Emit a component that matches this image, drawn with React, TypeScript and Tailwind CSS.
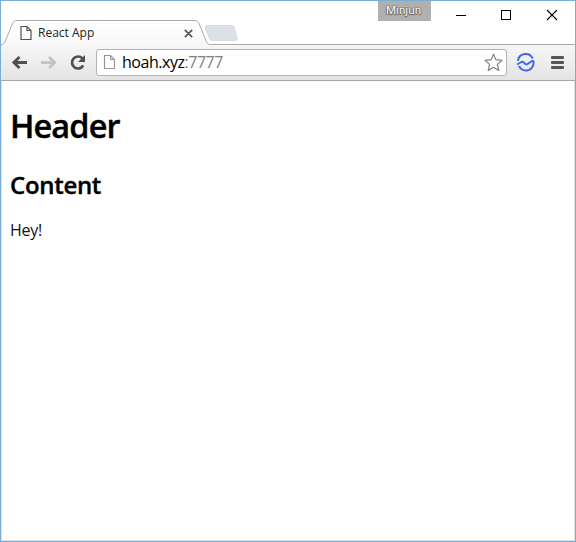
import React from "react";

function PageIcon({ className, stroke }: { className: string; stroke: string }) {
  return (
    <svg className={className} viewBox="0 0 12 16" fill="none" stroke={stroke} strokeWidth="1.2">
      <path d="M1 1.5h6L11 5.500v9H1zM7 1.500v4h4" />
    </svg>
  );
}

function TitleBar() {
  return (
    <div className="relative flex h-[43px] shrink-0 items-start bg-white">
      <svg className="absolute left-0 top-0 h-[44px] w-[574px]" viewBox="1 1 574 44" fill="none">
        <defs>
          <linearGradient id="tab" x1="0" y1="0" x2="0" y2="1">
            <stop offset="0" stopColor="#ffffff" />
            <stop offset="1" stopColor="#f8f8f8" />
          </linearGradient>
        </defs>
        <path d="M1 44.500H3C5 44.500 5.500 43 6.300 41L13.500 23.500C14.500 21.300 15.500 20.500 18 20.500H194C197 20.500 198 21.300 199 23.500L206.500 41.500C207.500 44 208.500 44.500 211 44.500H575V45H1Z" fill="url(#tab)" />
        <path d="M1 44.500C4 44.500 4.500 43 5.300 41L12.500 23.500C13.500 21.300 14.500 20.500 17 20.500H194C197 20.500 198 21.300 199 23.500L206.500 41.500C207.500 44 208.500 44.500 211 44.500H575" stroke="#aaaaaa" />
        <path d="M208 25.500H231C233 25.500 233.700 26.300 234.300 28L236.800 37.500C237.500 40 237 40.500 235 40.500H213C211 40.500 210 40 209.300 38.500L205.500 28.500C204.800 26.500 205.500 25.500 208 25.500Z" fill="#dce1e8" stroke="#d8dade" />
      </svg>
      <div className="relative mt-[20px] flex h-[24px] w-[204px] items-center pl-[19px]">
        <PageIcon className="h-[16px] w-[12px]" stroke="#505050" />
        <span className="ml-[6px] whitespace-nowrap font-['Open_Sans'] text-[12px] leading-none text-[#222]">React App</span>
        <svg className="ml-auto mr-[12px] h-[9px] w-[9px]" viewBox="0 0 9 9" stroke="#5a5a5a" strokeWidth="1.700">
          <path d="M.8.8l7.400 7.400M8.200.8L.8 8.200" />
        </svg>
      </div>
      <div className="relative ml-[173px] flex h-[20px] w-[53px] items-center justify-center bg-[#b0b0b0] pr-[2px] font-['Roboto'] text-[11.500px] leading-none tracking-[0.1px] text-white [text-shadow:0_0_1px_#444,0_0_2px_#555,0_1px_1px_#555]">
        Minjun
      </div>
      <svg className="relative ml-[22px] h-[24px] w-[110px]" viewBox="453 1 110 24" fill="none" stroke="#000" shapeRendering="crispEdges">
        <path d="M456 15.500h10M501.500 10.500h9v9h-9z" />
        <path d="M547 10l10 10M557 10l-10 10" shapeRendering="auto" strokeWidth="1.100" />
      </svg>
    </div>
  );
}

function Toolbar() {
  return (
    <div className="flex h-[37px] shrink-0 items-center border-b border-[#a7a7a7] bg-linear-to-b from-[#f7f7f7] to-[#e4e4e4] font-['Open_Sans']">
      <svg className="h-[36px] w-[95px] shrink-0" viewBox="1 44 95 36" fill="none">
        <path d="M27 62.500H14M19.500 57L13.800 62.500L19.500 68" stroke="#505050" strokeWidth="2.800" />
        <path d="M41 62.500H54M49 57L54.700 62.500L49 68" stroke="#c4c4c4" strokeWidth="2.800" />
        <path d="M82.300 58.300A6 6 0 1 0 83.200 65.500" stroke="#505050" strokeWidth="2.700" />
        <path d="M85 55V62H78Z" fill="#505050" />
      </svg>
      <div className="flex h-[27px] w-[411px] shrink-0 items-center rounded-[3px] border border-[#b3b3b3] bg-white pl-[6px]">
        <PageIcon className="h-[16px] w-[13px]" stroke="#969696" />
        <span className="ml-[6px] whitespace-nowrap text-[16px] leading-none tracking-[-0.47px] text-black">
          hoah.xyz<span className="text-[#808080]">:7777</span>
        </span>
        <svg className="ml-auto mr-[3px] h-[19px] w-[19px]" viewBox="0 0 19 19" fill="#fff" stroke="#808080" strokeWidth="1.200" strokeLinejoin="round">
          <path d="M9.500 1.200L11.900 6.700L18 7.300L13.400 11.400L14.800 17.500L9.500 14.300L4.200 17.500L5.600 11.400L1 7.300L7.100 6.700Z" />
        </svg>
      </div>
      <svg className="ml-[9px] h-[20px] w-[19px] shrink-0" viewBox="516 52.500 19 20" fill="none" stroke="#3f69e4" strokeWidth="2">
        <path d="M518 61.500A7.700 7.700 0 0 1 532.700 59" />
        <path d="M517 65L521.500 62.500Q522.700 61.900 523.700 62.900L525.700 64.700Q526.500 65.300 527.500 64.500L532 61.500H533.300A7.600 7.600 0 0 1 519 66.500" strokeLinejoin="round" />
      </svg>
      <div className="ml-[16px] flex w-[13px] flex-col gap-[2px]">
        {[0, 1, 2].map((i) => (
          <div key={i} className="h-[3px] rounded-[1px] bg-[#555]" />
        ))}
      </div>
    </div>
  );
}

export default function App() {
  return (
    <div className="flex h-[542px] w-[576px] flex-col overflow-hidden border border-[#7badd3] bg-white font-['Open_Sans',sans-serif]">
      <TitleBar />
      <Toolbar />
      <main className="flex-1 border border-t-0 border-[#e3e3e3] pl-[8px] text-black">
        <h1 className="mt-[23px] text-[32.500px] font-semibold leading-[44px] tracking-[-0.900px] [-webkit-text-stroke:0.4px_black]">Header</h1>
        <h2 className="mt-[20px] text-[24px] font-semibold leading-[34px] tracking-[-0.300px] [-webkit-text-stroke:0.4px_black]">Content</h2>
        <p className="mt-[18px] text-[16px] font-normal leading-[21px] tracking-[-0.300px] text-[#111]">Hey!</p>
      </main>
    </div>
  );
}
